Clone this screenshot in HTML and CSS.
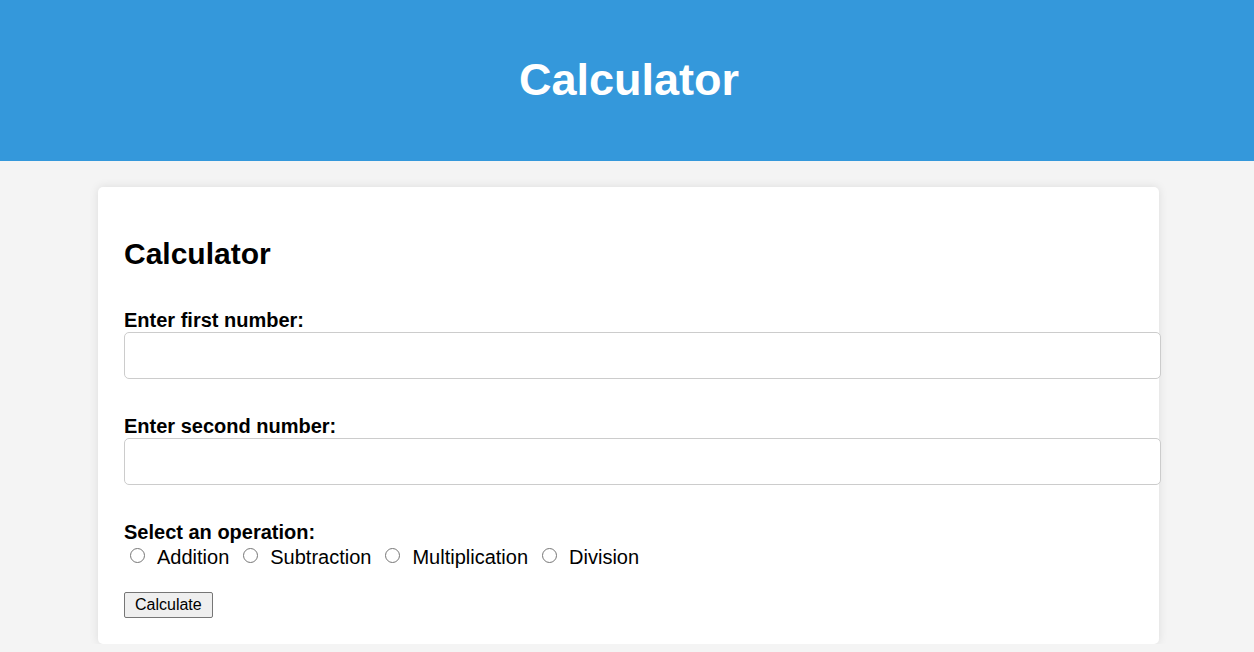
FILE: index.html
```html
<!DOCTYPE html>
<html lang="en">
<head>
<meta charset="utf-8">
<title>Calculator</title>
<link rel="stylesheet" href="styles.css">
</head>
<body>
<header class="site-header">
  <h1 class="site-title">Calculator</h1>
</header>
<main class="card">
  <h2 class="card-title">Calculator</h2>
  <form class="calc-form">
    <div class="field">
      <label class="field-label" for="num1">Enter first number:</label>
      <input class="text-input" type="text" id="num1">
    </div>
    <div class="field">
      <label class="field-label" for="num2">Enter second number:</label>
      <input class="text-input" type="text" id="num2">
    </div>
    <div class="field field-ops">
      <span class="field-label">Select an operation:</span>
      <div class="ops">
        <label class="op"><input class="radio" type="radio" name="op"><span class="op-text">Addition</span></label>
        <label class="op"><input class="radio" type="radio" name="op"><span class="op-text">Subtraction</span></label>
        <label class="op"><input class="radio" type="radio" name="op"><span class="op-text">Multiplication</span></label>
        <label class="op"><input class="radio" type="radio" name="op"><span class="op-text">Division</span></label>
      </div>
    </div>
    <div class="actions">
      <button class="btn" type="button">Calculate</button>
    </div>
  </form>
</main>
</body>
</html>
```
FILE: styles.css
```css
html, body {
  margin: 0;
  padding: 0;
}
body {
  background: #f4f4f4;
  font-family: "Liberation Sans", Arial, sans-serif;
  color: #000;
  font-size: 20px;
}
.site-header {
  background: #3498db;
  height: 161px;
  display: flex;
  align-items: center;
  justify-content: center;
  padding-left: 4px;
}
.site-title {
  margin: 0;
  padding-bottom: 2px;
  color: #fff;
  font-size: 45px;
  font-weight: bold;
  line-height: 1.15;
}
.card {
  display: block;
  width: 1009px;
  margin: 26px 0 0 calc(50% - 529px);
  padding: 26px;
  background: #fff;
  border-radius: 5px;
  box-shadow: 0 0 10px rgba(0, 0, 0, 0.1);
}
.card-title {
  margin: 24px 0 37px;
  font-size: 30px;
  font-weight: bold;
  line-height: 1.15;
}
.calc-form {
  display: flex;
  flex-direction: column;
  gap: 36px;
}
.field {
  display: flex;
  flex-direction: column;
}
.field-label {
  display: block;
  font-weight: bold;
  font-size: 20px;
  line-height: 23px;
}
.text-input {
  display: block;
  width: 100%;
  box-sizing: content-box;
  height: 21px;
  padding: 12px 13px;
  margin: 0;
  border: 1px solid #ccc;
  border-radius: 5px;
  font-size: 16px;
  font-family: "Liberation Sans", Arial, sans-serif;
  background: #fff;
}
.ops {
  display: flex;
  align-items: center;
  height: 23px;
  margin-top: 2px;
  padding-left: 6px;
  gap: 14px;
}
.op {
  display: flex;
  align-items: center;
  font-size: 20px;
  line-height: 23px;
}
.radio {
  width: 15px;
  height: 15px;
  margin: 0 0 3px 0;
}
.op-text {
  margin-left: 12px;
}
.actions {
  margin-top: -13px;
}
.btn {
  font-family: "Liberation Sans", Arial, sans-serif;
  font-size: 16px;
  line-height: 18px;
  padding: 3px 10px;
  margin: 0;
  background: #efefef;
  color: #000;
  border: 1px solid #767676;
  border-radius: 2px;
}
```
